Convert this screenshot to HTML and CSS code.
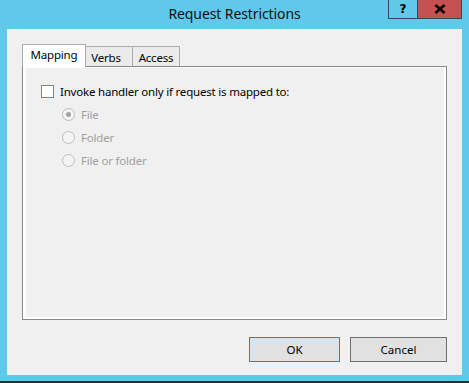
FILE: index.html
```html
<!DOCTYPE html>
<html>
<head>
<meta charset="utf-8">
<link rel="stylesheet" href="styles.css">
</head>
<body>
<div class="window">
  <div class="titlebar">
    <div class="spacer"></div>
    <div class="title">Request Restrictions</div>
    <div class="caption-buttons">
      <div class="cbtn help">?</div>
      <div class="cbtn close">
        <svg width="12" height="10" viewBox="0 0 12 10"><path d="M1.5 1 L10.5 9 M10.5 1 L1.5 9" stroke="#000" stroke-width="2.6" fill="none"/></svg>
      </div>
    </div>
  </div>
  <div class="client">
    <div class="tabs">
      <div class="tab active">Mapping</div>
      <div class="tab verbs">Verbs</div>
      <div class="tab access">Access</div>
    </div>
    <div class="panel">
      <div class="page">
        <label class="check-row">
          <span class="checkbox"></span>
          <span class="check-label">Invoke handler only if request is mapped to:</span>
        </label>
        <div class="radios">
          <div class="radio-row"><span class="radio checked"></span><span class="radio-label">File</span></div>
          <div class="radio-row"><span class="radio"></span><span class="radio-label">Folder</span></div>
          <div class="radio-row"><span class="radio"></span><span class="radio-label">File or folder</span></div>
        </div>
      </div>
    </div>
    <div class="buttons">
      <div class="btn default">OK</div>
      <div class="btn">Cancel</div>
    </div>
  </div>
  <div class="bottom-edge"></div>
</div>
</body>
</html>
```

FILE: styles.css
```css
html, body {
  margin: 0;
  padding: 0;
}
body {
  width: 469px;
  height: 383px;
  overflow: hidden;
  font-family: "Noto Sans", "Open Sans", sans-serif;
}
.window {
  width: 469px;
  height: 383px;
  background: #62c8ea;
  display: flex;
  flex-direction: column;
}
.titlebar {
  height: 29px;
  display: grid;
  grid-template-columns: 1fr auto 1fr;
  align-items: start;
}
.title {
  font-size: 14px;
  letter-spacing: -0.1px;
  color: #111;
  line-height: 29px;
  margin-top: -1px;
}
.caption-buttons {
  justify-self: end;
  display: flex;
  margin-right: 7px;
}
.cbtn {
  height: 19px;
  box-sizing: border-box;
  border: 1px solid #2e4a5c;
  border-top: none;
  display: flex;
  align-items: center;
  justify-content: center;
  font-family: "DejaVu Sans", sans-serif;
  font-weight: bold;
  font-size: 12px;
  color: #000;
}
.help {
  width: 29px;
  border-right: none;
}
.close {
  width: 45px;
  background: #c75050;
}
.client {
  margin: 0 7px;
  height: 346px;
  background: #f0f0f0;
  box-sizing: border-box;
  padding: 15px 15px 0 15px;
  display: flex;
  flex-direction: column;
}
.tabs {
  display: flex;
  align-items: flex-end;
  height: 22px;
  font-size: 11.5px;
  letter-spacing: -0.2px;
  color: #000;
}
.tab {
  box-sizing: border-box;
  height: 20px;
  width: 47px;
  border-top: 1px solid #acacac;
  border-right: 1px solid #acacac;
  background: #ebebeb;
  text-align: center;
  line-height: 19px;
  padding-top: 1px;
}
.tab.active {
  position: relative;
  z-index: 1;
  width: 64px;
  height: 23px;
  margin-bottom: -1px;
  border-left: 1px solid #acacac;
  background: #fff;
  padding-top: 0;
  line-height: 20px;
}
.tab.verbs {
  padding-right: 6px;
}
.panel {
  width: 425px;
  height: 254px;
  box-sizing: border-box;
  border: 1px solid #898989;
  background: #fff;
  padding: 1px 2px 2px 3px;
  display: flex;
}
.page {
  flex: 1;
  background: #f0f0f0;
  box-sizing: border-box;
  padding: 16px 0 0 15px;
  font-size: 11.5px;
  letter-spacing: -0.2px;
}
.check-row {
  display: flex;
  align-items: center;
  height: 14px;
}
.checkbox {
  width: 13px;
  height: 13px;
  box-sizing: border-box;
  border: 1px solid #3399e6;
  background: #fff;
  margin-right: 6px;
}
.check-label {
  color: #000;
}
.radios {
  display: flex;
  flex-direction: column;
  gap: 10px;
  padding: 10px 0 0 21px;
}
.radio-row {
  display: flex;
  align-items: center;
  height: 13px;
}
.radio {
  width: 13px;
  height: 13px;
  box-sizing: border-box;
  border: 1px solid #bcbcbc;
  border-radius: 50%;
  background: #f4f4f4;
  margin-right: 6px;
  display: flex;
  align-items: center;
  justify-content: center;
}
.radio.checked::after {
  content: "";
  width: 5px;
  height: 5px;
  border-radius: 50%;
  background: #a3a3a3;
}
.radio-label {
  color: #a0a0a0;
}
.buttons {
  display: flex;
  justify-content: flex-end;
  gap: 10px;
  margin-top: 17px;
}
.btn {
  box-sizing: border-box;
  width: 97px;
  height: 25px;
  border: 1px solid #707070;
  background: #e1e1e1;
  font-size: 11.5px;
  display: flex;
  align-items: center;
  justify-content: center;
  color: #000;
}
.btn.default {
  width: 91px;
  border-color: #3c7fb1;
}
.bottom-edge {
  margin-top: 6px;
  height: 2px;
  background: #2b2b2b;
}
```
